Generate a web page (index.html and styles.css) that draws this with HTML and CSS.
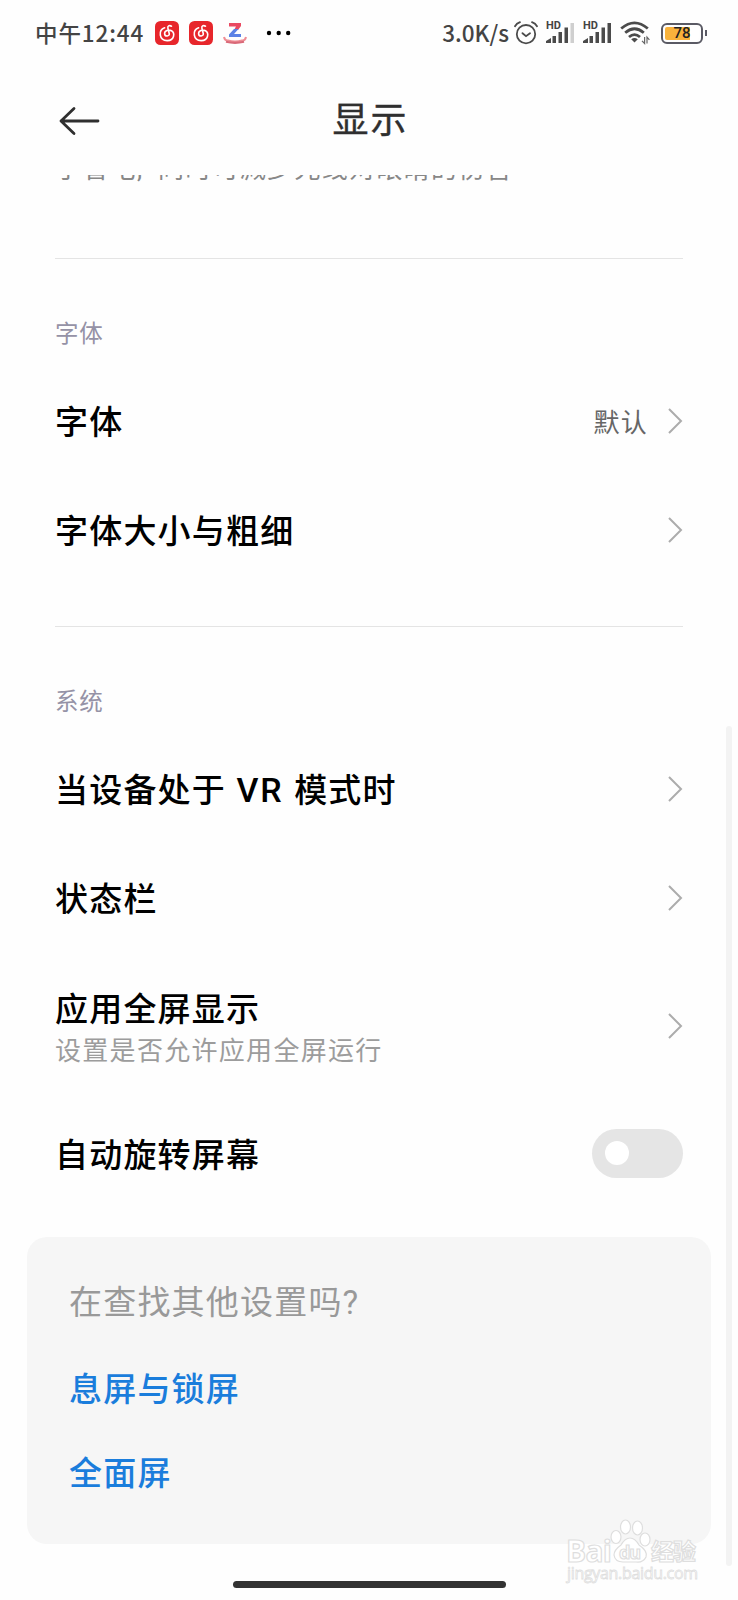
FILE: index.html
```html
<!DOCTYPE html>
<html lang="zh-CN">
<head>
  <meta charset="UTF-8" />
  <meta name="viewport" content="width=device-width, initial-scale=1.0"/>
  <title>显示</title>
  <link rel="stylesheet" href="styles.css">
</head>
<body>

  <svg class="defs" width="0" height="0">
    <symbol id="chevron" viewBox="0 0 16 28">
      <path d="M2 2 L14 14 L2 26" fill="none" stroke="#acacac" stroke-width="2"/>
    </symbol>
    <symbol id="music" viewBox="0 0 24 24">
      <rect width="24" height="24" rx="5.5" fill="#e7262b"/>
      <path d="M16.5 5.2 C14.2 3.8 12.4 5.2 12.9 7.3 L14.3 12.7 C14.8 15.4 9.9 15.9 9.6 12.8 C9.4 9.6 13.6 8.3 16.5 9.8 C20.2 12 19.4 19.3 12.4 19.6 C3.8 19.8 3.1 9.2 9.6 6.8" fill="none" stroke="#fff" stroke-width="1.6" stroke-linecap="round"/>
    </symbol>
  </svg>

  <div class="status-bar">
    <span class="time">中午12:44</span>
    <svg class="app-icon" width="24" height="24"><use href="#music"/></svg>
    <svg class="app-icon" width="24" height="24"><use href="#music"/></svg>
    <svg class="z-icon" width="24" height="24" viewBox="0 0 24 24">
      <path d="M6 2 H18 V5 L15 9 H11 L13 5.5 H6 Z" fill="#ea4a62"/>
      <path d="M11 8 H15.5 L11 13 H18 V16 H6 V13.5 Z" fill="#5b82e6"/>
      <path d="M1 16 Q2 20 5 19.5 Q12 21.5 19 19.5 Q22 20 23 16" fill="none" stroke="#ef8d95" stroke-width="2"/>
      <path d="M3 20.8 Q12 23 21 20.8" fill="none" stroke="#d96978" stroke-width="2.2"/>
    </svg>
    <svg class="dots" width="26" height="6" viewBox="0 0 26 6">
      <circle cx="3" cy="3" r="2.2"/><circle cx="12.7" cy="3" r="2.2"/><circle cx="22.2" cy="3" r="2.2"/>
    </svg>
    <span class="speed">3.0K/s</span>
    <svg class="alarm" width="24" height="24" viewBox="0 0 24 24" fill="none" stroke="#4b4b4b" stroke-width="1.8" stroke-linecap="round">
      <circle cx="12" cy="13.2" r="9.2"/>
      <path d="M8.5 12.2 L12 15.2 L16 12.2 M1 5.2 Q2.5 2.5 6 1.2 M18 1.2 Q21.5 2.5 23 5.2"/>
    </svg>
    <div class="signal">
      <span>HD</span>
      <svg width="29" height="20" viewBox="0 0 29 20">
        <path d="M0 20 V18 L5 15 V20 Z M6.5 13 H10 V20 H6.5 Z M12.5 9 H16 V20 H12.5 Z M18.5 4.5 H22 V20 H18.5 Z" fill="#4b4b4b"/>
        <path d="M24.5 0 H28 V20 H24.5 Z" fill="#cfcfcf"/>
      </svg>
    </div>
    <div class="signal">
      <span>HD</span>
      <svg width="29" height="20" viewBox="0 0 29 20">
        <path d="M0 20 V18 L5 15 V20 Z M6.5 13 H10 V20 H6.5 Z M12.5 9 H16 V20 H12.5 Z M18.5 4.5 H22 V20 H18.5 Z M24.5 0 H28 V20 H24.5 Z" fill="#4b4b4b"/>
      </svg>
    </div>
    <svg class="wifi" width="30" height="24" viewBox="0 0 30 24">
      <g fill="none" stroke="#4b4b4b" stroke-width="2.8">
        <path d="M1.2 7.5 Q14.5 -3.8 27.8 7.5"/>
        <path d="M5.2 11.8 Q14.5 3.8 23.8 11.8"/>
        <path d="M9 16 Q14.5 11.2 20 16"/>
      </g>
      <path d="M14.5 21.5 L11.2 18.2 Q14.5 15.8 17.8 18.2 Z" fill="#4b4b4b"/>
      <path d="M24.6 16 V22.5 L22 19.8 M27 22.5 V16 L29.4 18.8" fill="none" stroke="#666" stroke-width="1.2"/>
    </svg>
    <div class="battery"><span>78</span></div>
  </div>

  <header>
    <svg class="back" width="42" height="30" viewBox="0 0 42 30">
      <path d="M16 2.5 L3 15 L16 27.5 M3 15 H40" fill="none" stroke="#2f2f2f" stroke-width="2.8" stroke-linecap="round" stroke-linejoin="round"/>
    </svg>
    <h1>显示</h1>
  </header>

  <main>
    <div class="scrolled"><p>于省电, 同时可减少光线对眼睛的伤害</p></div>

    <section>
      <h2>字体</h2>
      <div class="row">
        <span class="name">字体</span>
        <span class="value">默认</span>
        <svg class="chevron"><use href="#chevron"/></svg>
      </div>
      <div class="row">
        <span class="name">字体大小与粗细</span>
        <svg class="chevron"><use href="#chevron"/></svg>
      </div>
    </section>

    <section>
      <h2>系统</h2>
      <div class="row">
        <span class="name">当设备处于 <span class="latin">VR</span> 模式时</span>
        <svg class="chevron"><use href="#chevron"/></svg>
      </div>
      <div class="row">
        <span class="name">状态栏</span>
        <svg class="chevron"><use href="#chevron"/></svg>
      </div>
      <div class="row tall">
        <div class="name">
          应用全屏显示
          <p class="desc">设置是否允许应用全屏运行</p>
        </div>
        <svg class="chevron"><use href="#chevron"/></svg>
      </div>
      <div class="row">
        <span class="name">自动旋转屏幕</span>
        <span class="toggle"></span>
      </div>
    </section>
  </main>

  <div class="card">
    <p>在查找其他设置吗?</p>
    <a>息屏与锁屏</a>
    <a>全面屏</a>
  </div>

  <div class="home-bar"></div>
  <div class="scrollbar"></div>

  <svg class="watermark" width="150" height="72" viewBox="0 0 150 72">
    <g fill="#fff" stroke="#dedede" stroke-width="1.2">
      <ellipse cx="56" cy="23" rx="5" ry="6.5"/>
      <ellipse cx="65.5" cy="13" rx="5" ry="7"/>
      <ellipse cx="77.5" cy="14" rx="5" ry="7"/>
      <ellipse cx="85" cy="25.5" rx="5" ry="6.5"/>
      <path d="M70 24 Q75 24 79 31 Q88 37 86 43 Q83 49 76 48 H63 Q55 48 54 41 Q54 36 61 31 Q65 24 70 24 Z"/>
      <text class="wm-logo" x="6" y="48" textLength="46">Bai</text>
      <text class="wm-du" x="59" y="45" textLength="22">du</text>
      <text class="wm-cn" x="91" y="46" textLength="45">经验</text>
      <text class="wm-url" x="7" y="65" textLength="131">jingyan.baidu.com</text>
    </g>
  </svg>

</body>
</html>
```
FILE: styles.css
```css
body {
  font-family: Roboto, 'Noto Sans CJK SC', sans-serif;
  background: #fefefe;
  color: #000;
  margin: 0;
  height: 1600px;
  overflow: hidden;
  position: relative;
}

h1, h2, p {
  margin: 0;
  font-weight: normal;
}

svg {
  display: block;
  flex: none;
}

.defs {
  position: absolute;
}

.status-bar {
  display: flex;
  align-items: center;
  height: 66px;
  padding: 0 35px 0 35px;
  color: #444;
  font-weight: 500;
}

.time {
  width: 120px;
  font-family: 'Noto Sans CJK SC', sans-serif;
  font-size: 22.5px;
  line-height: 32px;
  padding-bottom: 2px;
  letter-spacing: 0.9px;
  white-space: nowrap;
}

.app-icon {
  margin-right: 10px;
}

.z-icon {
  margin-right: 19px;
}

.dots {
  margin-right: auto;
}

.speed {
  font-family: 'Noto Sans CJK SC', sans-serif;
  font-size: 22.5px;
  line-height: 32px;
  padding-bottom: 2px;
  letter-spacing: 0;
  white-space: nowrap;
}

.alarm {
  margin: 0 8px 0 5px;
}

.signal {
  display: grid;
  width: 29px;
  margin-right: 8px;
}

.signal > * {
  grid-area: 1 / 1;
}

.signal span {
  font-size: 11px;
  line-height: 10px;
  font-weight: bold;
  margin-top: -2px;
}

.wifi {
  margin-right: 11px;
}

.battery {
  display: flex;
  align-items: center;
  justify-content: center;
  box-sizing: border-box;
  width: 42px;
  height: 21px;
  border: 2.5px solid #5a5a64;
  border-radius: 6px;
  background: linear-gradient(90deg, #f9b23b 25px, #fff 25px) content-box;
  padding: 2px;
  font-size: 15px;
  color: #222;
  position: relative;
}

.battery::after {
  content: '';
  position: absolute;
  right: -6px;
  top: 5px;
  width: 2px;
  height: 6px;
  background: #5a5a64;
}

header {
  display: grid;
  grid-template-columns: 42px 1fr 42px;
  align-items: center;
  height: 109px;
  padding: 0 58px;
}

header h1 {
  text-align: center;
  font-family: 'Noto Sans CJK SC', sans-serif;
  font-size: 36px;
  letter-spacing: 2px;
  line-height: 52px;
  padding: 0 0 7px 3px;
  color: #2f2f2f;
  -webkit-text-stroke: 0.4px #2f2f2f;
}

main {
  padding: 0 55px;
}

.scrolled {
  height: 83px;
}

.scrolled p {
  display: flex;
  align-items: flex-end;
  height: 11px;
  overflow: hidden;
  font-size: 26px;
  line-height: 34px;
  letter-spacing: 1.3px;
  word-spacing: 7px;
  color: #888;
}

section {
  border-top: 1px solid #e4e4e4;
  height: 367px;
}

h2 {
  font-size: 23.5px;
  line-height: 34px;
  letter-spacing: 0.8px;
  padding: 58px 0 15px;
  color: #9592a6;
}

.row {
  display: flex;
  align-items: center;
  height: 109.5px;
}

.row.tall {
  height: 146px;
}

.name {
  flex: 1;
  font-size: 33px;
  line-height: 46px;
  padding-top: 4px;
  letter-spacing: 1.2px;
  font-weight: 500;
}

.latin {
  letter-spacing: 2px;
  margin: 0 1px;
  font-size: 34px;
}

.value {
  font-size: 26px;
  letter-spacing: 1.2px;
  color: #666;
  margin-right: 19px;
}

.desc {
  font-size: 26px;
  line-height: 36px;
  letter-spacing: 1.3px;
  font-weight: normal;
  color: #9c9c9c;
}

.chevron {
  width: 16px;
  height: 28px;
}

.toggle {
  box-sizing: border-box;
  width: 91px;
  height: 49px;
  padding: 12px 13px;
  border-radius: 25px;
  background: #e5e5e5;
}

.toggle::before {
  content: '';
  display: block;
  width: 24px;
  height: 24px;
  border-radius: 50%;
  background: #fff;
}

section:last-child {
  height: 610px;
}

.card {
  box-sizing: border-box;
  margin: 0 27px;
  height: 307px;
  padding: 43px 42px;
  border-radius: 20px;
  background: #f6f6f6;
  font-size: 33px;
  line-height: 46px;
  letter-spacing: 1.2px;
}

.card p {
  color: #999;
}

.card a {
  display: block;
  margin-top: 38px;
  color: #1a7ddc;
  font-weight: 500;
}

.card p + a {
  margin-top: 41px;
}

.home-bar {
  width: 273px;
  height: 7px;
  margin: 37px auto 0;
  border-radius: 4px;
  background: #333;
}

.scrollbar {
  position: absolute;
  left: 726px;
  top: 726px;
  width: 6px;
  height: 840px;
  border-radius: 3px;
  background: #f3f3f3;
}

.watermark {
  position: absolute;
  left: 560px;
  top: 1514px;
}

.wm-logo {
  font: bold 30px 'Open Sans', sans-serif;
}

.wm-du {
  font: bold 18px 'Open Sans', sans-serif;
}

.wm-cn {
  font: bold 23px 'Noto Sans CJK SC', sans-serif;
}

.wm-url {
  font: 16px 'Open Sans', sans-serif;
  stroke-width: 0.8px;
}
```
